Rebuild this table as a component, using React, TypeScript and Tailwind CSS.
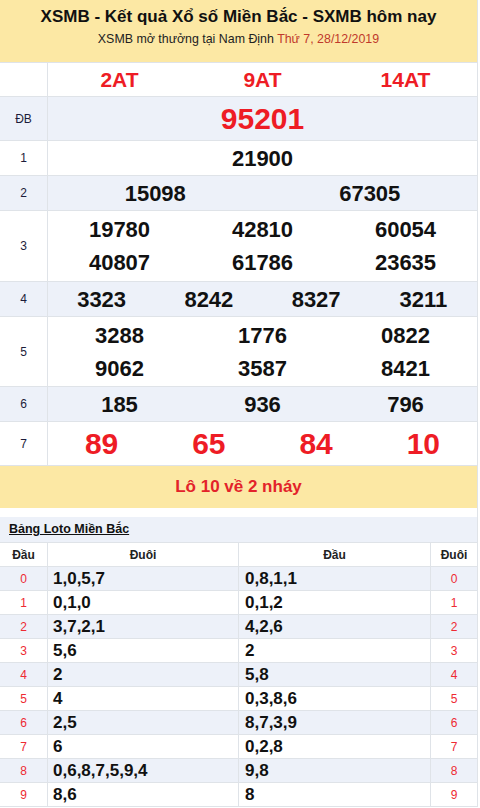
import React from "react";

const BORDER = "border-[#dfe3e8]";

function Row({
  label,
  bg,
  h,
  children,
}: {
  label: string;
  bg: string;
  h: string;
  children: React.ReactNode;
}) {
  return (
    <div className={`flex ${bg} ${h} border-b ${BORDER}`}>
      <div className={`w-[48px] shrink-0 border-r ${BORDER} flex items-center justify-center text-[12px] text-[#1c1c3a]`}>
        {label}
      </div>
      <div className="flex-1 flex flex-col justify-center">{children}</div>
    </div>
  );
}

function Cols({ items, cls }: { items: string[]; cls: string }) {
  return (
    <div className="flex">
      {items.map((t, i) => (
        <div key={i} className={`flex-1 text-center ${cls}`}>
          {t}
        </div>
      ))}
    </div>
  );
}

const num = "text-[22px] font-bold text-[#111] leading-[33px]";

const loto: [string, string, string][] = [
  ["0", "1,0,5,7", "0,8,1,1"],
  ["1", "0,1,0", "0,1,2"],
  ["2", "3,7,2,1", "4,2,6"],
  ["3", "5,6", "2"],
  ["4", "2", "5,8"],
  ["5", "4", "0,3,8,6"],
  ["6", "2,5", "8,7,3,9"],
  ["7", "6", "0,2,8"],
  ["8", "0,6,8,7,5,9,4", "9,8"],
  ["9", "8,6", "8"],
];

export default function App() {
  return (
    <div
      className="w-[480px] h-[808px] bg-white overflow-hidden"
      style={{ fontFamily: '"Liberation Sans", Arial, sans-serif' }}
    >
      <div className={`w-[478px] border-r ${BORDER}`}>
        {/* Header */}
        <div className={`h-[63px] bg-[#fce8a4] flex flex-col items-center border-b ${BORDER}`}>
          <div className="mt-[7px] text-[17px] font-bold text-[#111] leading-[20px]">
            XSMB - Kết quả Xổ số Miền Bắc - SXMB hôm nay
          </div>
          <div className="mt-[4px] text-[12.4px] text-[#222] leading-[16px]">
            XSMB mở thưởng tại Nam Định{" "}
            <span className="text-[#c0392b]">Thứ 7, 28/12/2019</span>
          </div>
        </div>

        <Row label="" bg="bg-white" h="h-[34px]">
          <Cols items={["2AT", "9AT", "14AT"]} cls="text-[21px] font-bold text-[#ee1c25] leading-[24px]" />
        </Row>
        <Row label="ĐB" bg="bg-[#edf1f9]" h="h-[44px]">
          <Cols items={["95201"]} cls="text-[30px] font-bold text-[#ee1c25] leading-[34px]" />
        </Row>
        <Row label="1" bg="bg-white" h="h-[35px]">
          <Cols items={["21900"]} cls={num} />
        </Row>
        <Row label="2" bg="bg-[#edf1f9]" h="h-[35px]">
          <Cols items={["15098", "67305"]} cls={num} />
        </Row>
        <Row label="3" bg="bg-white" h="h-[71px]">
          <Cols items={["19780", "42810", "60054"]} cls={num} />
          <Cols items={["40807", "61786", "23635"]} cls={num} />
        </Row>
        <Row label="4" bg="bg-[#edf1f9]" h="h-[35px]">
          <Cols items={["3323", "8242", "8327", "3211"]} cls={num} />
        </Row>
        <Row label="5" bg="bg-white" h="h-[70px]">
          <Cols items={["3288", "1776", "0822"]} cls={num} />
          <Cols items={["9062", "3587", "8421"]} cls={num} />
        </Row>
        <Row label="6" bg="bg-[#edf1f9]" h="h-[35px]">
          <Cols items={["185", "936", "796"]} cls={num} />
        </Row>
        <Row label="7" bg="bg-white" h="h-[44px]">
          <Cols items={["89", "65", "84", "10"]} cls="text-[30px] font-bold text-[#ee1c25] leading-[36px]" />
        </Row>

        {/* Lô */}
        <div className="h-[42px] bg-[#fce8a4] flex items-center justify-center text-[17px] font-bold text-[#e3222a]">
          Lô 10 về 2 nháy
        </div>
        <div className="h-[9px] bg-white" />

        {/* Loto table */}
        <div className={`h-[26px] bg-[#edf1f9] flex items-center pl-[9px] border-b ${BORDER}`}>
          <span className="text-[12.5px] font-bold underline text-[#111]">Bảng Loto Miền Bắc</span>
        </div>
        <div className={`h-[24px] flex bg-white border-b ${BORDER} text-[12px] font-bold text-[#222]`}>
          <div className={`w-[48px] border-r ${BORDER} flex items-center justify-center`}>Đầu</div>
          <div className={`w-[191px] border-r ${BORDER} flex items-center justify-center`}>Đuôi</div>
          <div className={`w-[192px] border-r ${BORDER} flex items-center justify-center`}>Đầu</div>
          <div className="flex-1 flex items-center justify-center">Đuôi</div>
        </div>
        {loto.map(([d, a, b], i) => (
          <div
            key={d}
            className={`h-[24px] flex border-b ${BORDER} ${i % 2 === 0 ? "bg-[#edf1f9]" : "bg-white"}`}
          >
            <div className={`w-[48px] border-r ${BORDER} flex items-center justify-center text-[12px] text-[#ee2a33]`}>
              {d}
            </div>
            <div className={`w-[191px] border-r ${BORDER} flex items-center pl-[5px] text-[17px] font-bold text-[#111]`}>
              {a}
            </div>
            <div className={`w-[192px] border-r ${BORDER} flex items-center pl-[6px] text-[17px] font-bold text-[#111]`}>
              {b}
            </div>
            <div className="flex-1 flex items-center justify-center text-[12px] text-[#ee2a33]">{d}</div>
          </div>
        ))}
      </div>
    </div>
  );
}
